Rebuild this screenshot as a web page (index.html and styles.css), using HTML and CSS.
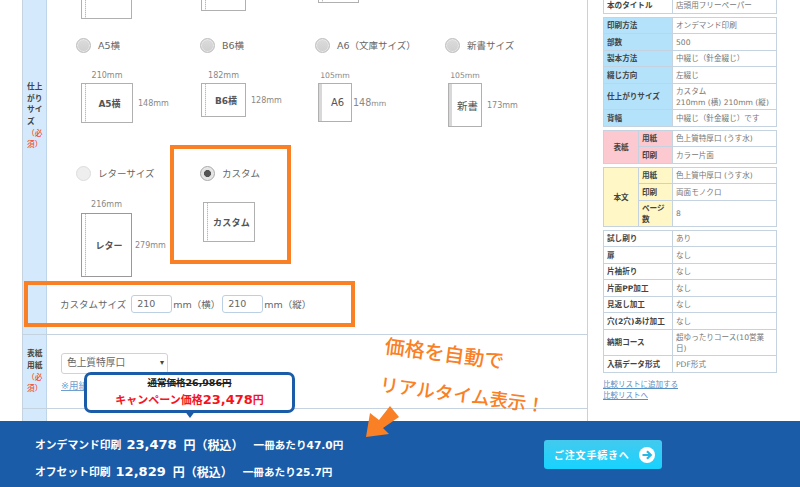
FILE: index.html
```html
<!DOCTYPE html>
<html lang="ja">
<head>
<meta charset="utf-8">
<title>見積り</title>
<link rel="stylesheet" href="styles.css">
</head>
<body>
<div class="page">
  <main class="form">
    <section class="row row-size">
      <div class="label"><span>仕上がりサイズ<em>（必須）</em></span></div>
      <div class="cell">
        <div class="sizes">
          <div class="opt opt-top">
            <div class="book b-top1"></div>
          </div>
          <div class="opt opt-top">
            <div class="book b-top2"></div>
          </div>
          <div class="opt opt-top">
            <div class="book b-top3"></div>
          </div>
          <div class="opt opt-top"></div>

          <div class="opt">
            <div class="radio"><i class="dot"></i>A5横</div>
            <div class="fig"><span class="w w-a5">210mm</span><div class="book b-a5">A5横</div><span class="h">148mm</span></div>
          </div>
          <div class="opt">
            <div class="radio"><i class="dot"></i>B6横</div>
            <div class="fig fig-b6"><span class="w w-b6">182mm</span><div class="book b-b6">B6横</div><span class="h">128mm</span></div>
          </div>
          <div class="opt">
            <div class="radio"><i class="dot"></i>A6（文庫サイズ）</div>
            <div class="fig fig-a6"><span class="w w-a6">105mm</span><div class="book b-a6 thin">A6</div><span class="h h-big">148<small>mm</small></span></div>
          </div>
          <div class="opt">
            <div class="radio"><i class="dot"></i>新書サイズ</div>
            <div class="fig fig-a6"><span class="w w-a6">105mm</span><div class="book b-sh thin">新書</div><span class="h">173mm</span></div>
          </div>

          <div class="opt opt-last">
            <div class="radio"><i class="dot dot-light"></i>レターサイズ</div>
            <div class="fig fig-lt"><span class="w w-lt">216mm</span><div class="book b-lt">レター</div><span class="h h-lt">279mm</span></div>
          </div>
          <div class="opt opt-last">
            <div class="radio"><i class="dot dot-on"></i>カスタム</div>
            <div class="fig fig-cu"><div class="book b-cu">カスタム</div></div>
          </div>
        </div>
        <div class="custom">
          カスタムサイズ
          <span class="input">210</span>mm（横）
          <span class="input input-2">210</span>mm（縦）
        </div>
      </div>
    </section>
    <section class="row row-paper">
      <div class="label"><span>表紙用紙<em>（必須）</em></span></div>
      <div class="cell">
        <div class="select">色上質特厚口<b>▾</b></div>
        <a class="note">※用紙</a>
      </div>
    </section>
    <section class="row row-rest">
      <div class="label"></div>
      <div class="cell"></div>
    </section>
  </main>

  <aside class="side">
    <table class="spec">
      <tr><th>本のタイトル</th><td>店頭用フリーペーパー</td></tr>
    </table>
    <table class="spec blue">
      <tr><th>印刷方法</th><td>オンデマンド印刷</td></tr>
      <tr><th>部数</th><td>500</td></tr>
      <tr><th>製本方法</th><td>中綴じ（針金綴じ）</td></tr>
      <tr><th>綴じ方向</th><td>左綴じ</td></tr>
      <tr class="tall"><th>仕上がりサイズ</th><td>カスタム<br>210mm (横) 210mm (縦)</td></tr>
      <tr><th>背幅</th><td>中綴じ（針金綴じ）です</td></tr>
    </table>
    <table class="spec pink">
      <tr><th rowspan="2" class="group">表紙</th><th class="sub">用紙</th><td>色上質特厚口 (うす水)</td></tr>
      <tr><th class="sub">印刷</th><td>カラー片面</td></tr>
    </table>
    <table class="spec yellow">
      <tr><th rowspan="3" class="group">本文</th><th class="sub">用紙</th><td>色上質中厚口 (うす水)</td></tr>
      <tr><th class="sub">印刷</th><td>両面モノクロ</td></tr>
      <tr class="tall"><th class="sub">ページ数</th><td>8</td></tr>
    </table>
    <table class="spec">
      <tr><th>試し刷り</th><td>あり</td></tr>
      <tr><th>扉</th><td>なし</td></tr>
      <tr><th>片袖折り</th><td>なし</td></tr>
      <tr><th>片面PP加工</th><td>なし</td></tr>
      <tr><th>見返し加工</th><td>なし</td></tr>
      <tr><th>穴(2穴)あけ加工</th><td>なし</td></tr>
      <tr class="tall"><th>納期コース</th><td>超ゆったりコース(10営業日)</td></tr>
      <tr><th>入稿データ形式</th><td>PDF形式</td></tr>
    </table>
    <div class="links">
      <a>比較リストに追加する</a>
      <a>比較リストへ</a>
    </div>
  </aside>
</div>

<div class="mark mark-custom"></div>
<div class="mark mark-size"></div>

<div class="tip">
  <s>通常価格26,986円</s>
  <p>キャンペーン価格<strong>23,478</strong>円</p>
</div>

<div class="note-1">価格を自動で</div>
<div class="note-2">リアルタイム表示！</div>

<footer class="bar">
  <div class="prices">
    <p><b>オンデマンド印刷</b><strong>23,478</strong><span class="tax">円（税込）</span><b class="per">一冊あたり47.0円</b></p>
    <p><b>オフセット印刷</b><strong>12,829</strong><span class="tax">円（税込）</span><b class="per">一冊あたり25.7円</b></p>
  </div>
  <a class="go">ご注文手続きへ
    <svg width="16" height="16" viewBox="0 0 16 16"><circle cx="8" cy="8" r="8" fill="#fff"/><path d="M3.5 8H11.5M8 4.2L11.8 8L8 11.8" fill="none" stroke="#25b9e8" stroke-width="2.2"/></svg>
  </a>
</footer>

<svg class="arrow" width="40" height="36" viewBox="0 0 40 36"><polygon points="1,32 5,8 14,15 25,1 34,12 18,23 24,29" fill="#f98025"/></svg>
</body>
</html>
```
FILE: styles.css
```css
* { box-sizing: border-box; }
html, body { margin: 0; height: 487px; overflow: hidden; background: #fff; }
body {
  position: relative;
  width: 800px;
  font-family: "DejaVu Sans", "Noto Sans CJK JP", sans-serif;
  color: #666;
  font-size: 9.5px;
}
.page {
  display: flex;
  align-items: flex-start;
  margin-top: -102px;
  padding-left: 22px;
}
.form {
  width: 566px;
  flex: none;
  border-left: 1px solid #c5d2e0;
  border-right: 1px solid #c5d2e0;
}
.row { display: flex; border-bottom: 1px solid #c5d2e0; }
.row-size { height: 437px; }
.row-paper { height: 74px; }
.row-rest { height: 100px; }
.label {
  width: 24px;
  flex: none;
  background: #d4eafc;
  border-right: 1px solid #bfd6ea;
  display: flex;
  align-items: center;
  font-size: 7.7px;
  line-height: 11.7px;
  font-weight: 700;
  color: #444;
  padding: 0 1px 0 4px;
}
.label em { display: block; font-style: normal; color: #f0502e; font-weight: 500; }
.cell { flex: 1; min-width: 0; }

.sizes {
  display: grid;
  grid-template-columns: 124px 115px 130px 1fr;
  grid-template-rows: 139px 128px 117px;
  padding-left: 29px;
}
.opt-top { display: flex; align-items: flex-end; }
.radio {
  display: flex;
  align-items: center;
  gap: 7px;
  height: 16px;
  font-size: 9.5px;
  color: #666;
}
.dot {
  width: 15px;
  height: 15px;
  border-radius: 50%;
  flex: none;
  border: 1px solid #bdbdbd;
  background: linear-gradient(#dcdcdc, #cfcfcf);
  box-shadow: inset 0 0 0 1px #e8e8e8;
}
.dot-light { background: #eee; border-color: #ddd; box-shadow: none; }
.dot-on {
  background: radial-gradient(circle, #555 0 3.2px, #e4e4e4 3.8px);
  border-color: #aaa;
}
.fig {
  display: grid;
  grid-template-columns: max-content max-content;
  grid-template-rows: 15px auto;
  align-items: center;
  column-gap: 5px;
  margin: 15px 0 0 5px;
}
.fig-b6 { margin-left: 1px; }
.fig-a6 { margin-left: 3px; column-gap: 1px; }
.fig-lt { grid-template-rows: 17px auto; }
.fig-cu { margin: 21px 0 0 3px; grid-template-rows: auto; }
.w { font-size: 8px; color: #888; text-align: center; grid-column: 1; line-height: 14px; }
.w-a6 { font-size: 7.7px; margin: 0 -4px; }
.h { font-size: 8px; color: #888; grid-column: 2; grid-row: 2; white-space: nowrap; }
.fig-a6 .h { padding-left: 4px; }
.h-big { font-size: 9.6px; padding-left: 0 !important; }
.h-big small { font-size: 7.7px; }
.h-lt { margin-left: -2px; }
.book {
  grid-column: 1;
  grid-row: 2;
  display: flex;
  align-items: center;
  justify-content: center;
  border: 1px solid #b0b0b0;
  background: repeating-linear-gradient(#bbb 0 1px, #e6e6e6 1px 2px) 3px 0 / 1px 100% no-repeat #fff;
  font-size: 9px;
  font-weight: 700;
  color: #555;
  padding-left: 5px;
  white-space: nowrap;
}
.thin {
  background: linear-gradient(#d8d8d8, #d8d8d8) 0 0 / 3px 100% no-repeat #fff;
  font-weight: 400;
  font-size: 10px;
}
.b-a5 { width: 52px; height: 40px; }
.b-b6 { width: 45px; height: 34px; }
.b-a6 { width: 34px; height: 39px; }
.b-sh { width: 34px; height: 44px; font-size: 10.5px; }
.b-lt { width: 51px; height: 64px; border-color: #999; }
.b-cu { width: 52px; height: 40px; grid-row: 1; letter-spacing: .3px; }
.b-top1 { width: 51px; height: 50px; margin-left: 5px; margin-bottom: 18px; }
.b-top2 { width: 45px; height: 50px; margin-left: 1px; margin-bottom: 26px; }
.b-top3 { width: 41px; height: 50px; margin-left: 3px; margin-bottom: 34px; }

.custom {
  display: flex;
  align-items: center;
  padding-left: 13px;
  height: 44px;
  font-size: 9.5px;
  color: #666;
}
.input {
  width: 41px;
  height: 18px;
  border: 1px solid #bcd0e4;
  border-radius: 3px;
  line-height: 16px;
  padding-left: 5px;
  margin: 0 1px 0 5px;
}
.input-2 { margin-left: 2px; }

.select {
  position: relative;
  width: 107px;
  height: 21px;
  margin: 18px 0 0 14px;
  border: 1px solid #d2d2d2;
  border-radius: 3px;
  padding-left: 5px;
  line-height: 18px;
  font-size: 9.7px;
  color: #666;
}
.select b { position: absolute; right: 3px; top: 0; font-size: 8px; color: #444; }
.note {
  display: block;
  margin: 4px 0 0 14px;
  font-size: 9.5px;
  color: #6f9fd0;
  text-decoration: underline;
}

.side { width: 174px; margin-left: 15px; padding-top: 99px; flex: none; }
.spec {
  width: 174px;
  table-layout: fixed;
  border-collapse: collapse;
  margin-bottom: 3px;
  font-size: 7.6px;
  line-height: 11px;
}
.spec th, .spec td {
  border: 1px solid #c5d2e0;
  height: 16px;
  padding: 0 3px;
  text-align: left;
  overflow: hidden;
}
.spec tr:nth-child(even) th, .spec tr:nth-child(even) td { height: 17px; }
.spec th { width: 69px; font-weight: 700; color: #444; background: #fff; white-space: nowrap; }
.spec td { color: #777; }
.spec .tall th, .spec .tall td { height: 26px; }
.spec .group { width: 35px; text-align: center; }
.spec .sub { width: 34px; white-space: normal; }
.blue th { background: #b5e2fb; }
.pink th { background: #fdc9d0; }
.yellow th { background: #fff8c6; }
.links { margin-top: 6px; font-size: 7.5px; line-height: 11px; }
.links a { display: block; color: #5a8fc4; text-decoration: underline; }

.mark { position: absolute; border: 4px solid #f98025; }
.mark-custom { left: 170px; top: 145px; width: 121px; height: 119px; }
.mark-size { left: 24px; top: 281px; width: 331px; height: 46px; }

.tip {
  position: absolute;
  left: 84px;
  top: 372px;
  width: 211px;
  height: 41px;
  background: #fff;
  border: 3px solid #1a5ca8;
  border-radius: 7px;
  text-align: center;
  color: #222;
  font-weight: 700;
  font-size: 9.5px;
}
.tip::after {
  content: "";
  position: absolute;
  left: 97px;
  top: 35px;
  border: 6px solid transparent;
  border-top: 8px solid #1a5ca8;
  border-bottom: 0;
}
.tip s { display: block; line-height: 11px; margin-top: 2px; }
.tip p { margin: 3px 0 0; color: #f4141e; font-size: 11px; line-height: 17px; }
.tip strong { font-size: 13px; }

.note-1, .note-2 {
  position: absolute;
  color: #f98025;
  font-weight: 500;
  line-height: 30px;
  white-space: nowrap;
  transform-origin: 0 50%;
  transform: rotate(7.5deg);
}
.note-1 { left: 385px; top: 331px; font-size: 20px; }
.note-2 { left: 380px; top: 370px; font-size: 18.5px; }

.bar {
  position: absolute;
  left: 0;
  right: 0;
  bottom: 0;
  height: 66px;
  background: #1a5ca8;
  color: #fff;
  display: flex;
  align-items: center;
  justify-content: space-between;
  padding: 0 138px 0 35px;
}
.prices { margin-top: 7px; }
.prices p { margin: 0; display: flex; align-items: center; height: 27px; white-space: nowrap; font-size: 10.8px; }
.prices strong { font-size: 13px; margin: 0 7px 0 5px; }
.prices .tax { font-size: 12px; font-weight: 700; margin-right: 10px; }
.prices .per { font-size: 10.6px; }
.go {
  display: flex;
  align-items: center;
  justify-content: space-between;
  width: 118px;
  height: 29px;
  margin-top: 1px;
  padding: 0 7px 0 10px;
  border-radius: 3px;
  background: linear-gradient(#45c9ee, #16d3ff);
  color: #fff;
  font-size: 10px;
  font-weight: 700;
  letter-spacing: .8px;
}
.arrow { position: absolute; left: 365px; top: 405px; }
```
